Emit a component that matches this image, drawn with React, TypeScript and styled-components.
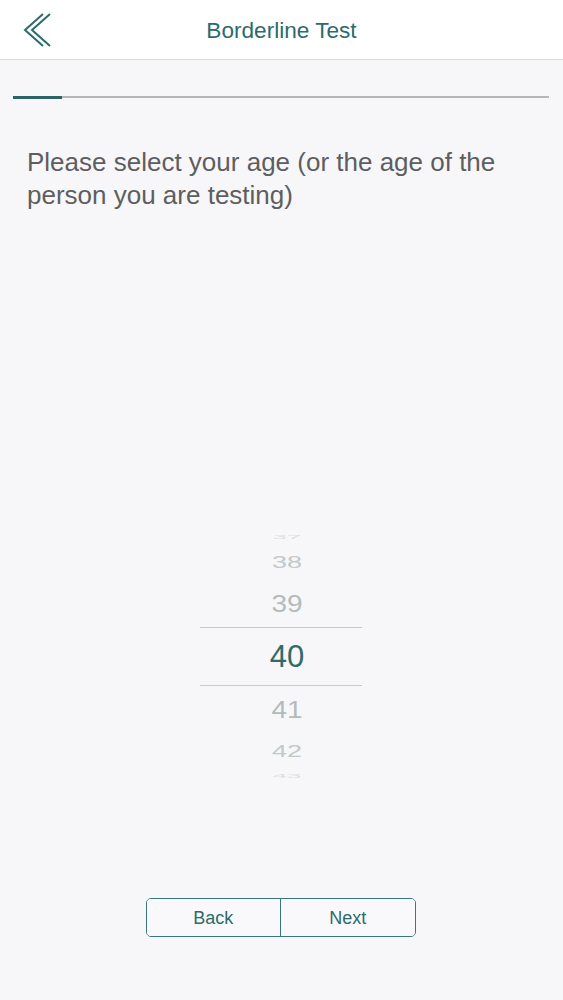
import React from "react";
import styled, { createGlobalStyle } from "styled-components";

const GlobalStyle = createGlobalStyle`
  html, body {
    margin: 0;
    padding: 0;
    background: #f7f7f9;
  }
  body {
    font-family: "Liberation Sans", Arial, Helvetica, sans-serif;
  }
`;

const TEAL = "#2c6b6d";

const Page = styled.div`
  width: 563px;
  min-height: 1000px;
  display: flex;
  flex-direction: column;
  background: #f7f7f9;
`;

const Header = styled.header`
  height: 59px;
  display: grid;
  grid-template-columns: 1fr auto 1fr;
  align-items: center;
  background: #ffffff;
  border-bottom: 1px solid #dedee0;
`;

const BackIcon = styled.button`
  justify-self: start;
  display: flex;
  padding: 0 0 0 23px;
  margin-top: 1px;
  border: none;
  background: none;
  cursor: pointer;
`;

const Title = styled.h1`
  margin: 0;
  padding-top: 3px;
  font-size: 22.6px;
  font-weight: 400;
  color: ${TEAL};
`;

const ProgressTrack = styled.div`
  position: relative;
  margin: 36px 14px 0 13px;
  height: 2px;
  background: #b4b6b8;
`;

const ProgressFill = styled.div`
  position: absolute;
  left: 0;
  top: -0.5px;
  height: 3px;
  background: #2a6466;
`;

const Question = styled.p`
  margin: 48px 27px 0 27px;
  font-size: 26px;
  line-height: 33px;
  color: #5e5e60;
`;

const Picker = styled.div`
  align-self: center;
  width: 162px;
  margin: 318px 0 0 -1px;
  display: flex;
  flex-direction: column;
`;

const PickerRow = styled.div<{ $h: number; $selected?: boolean }>`
  height: ${(p) => p.$h}px;
  box-sizing: border-box;
  display: flex;
  align-items: center;
  justify-content: center;
  padding-left: 12px;
  overflow: hidden;
  border-top: ${(p) => (p.$selected ? "1px solid #c9cacc" : "none")};
  border-bottom: ${(p) => (p.$selected ? "1px solid #c9cacc" : "none")};
`;

const PickerValue = styled.span<{ $size: number; $scale: number; $color: string }>`
  display: inline-block;
  font-size: ${(p) => p.$size}px;
  line-height: 1;
  color: ${(p) => p.$color};
  transform: scaleY(${(p) => p.$scale});
`;

const ButtonGroup = styled.div`
  align-self: center;
  margin: 115px 0 0 -2px;
  display: flex;
  width: 270px;
  height: 39px;
  box-sizing: border-box;
  border: 1.5px solid #3a7779;
  border-radius: 5px;
  overflow: hidden;
`;

const NavButton = styled.button<{ $divider?: boolean }>`
  flex: 1;
  border: none;
  border-right: ${(p) => (p.$divider ? "1.5px solid #3a7779" : "none")};
  background: #f9f9fb;
  font-family: "Liberation Sans", Arial, sans-serif;
  font-size: 18px;
  color: ${TEAL};
  padding: 1px 0 0 0;
  cursor: pointer;
`;

const rows = [
  { value: 37, h: 14, size: 26, scale: 0.2, color: "#dde0e0" },
  { value: 38, h: 36, size: 27, scale: 0.64, color: "#c3c8c8" },
  { value: 39, h: 47, size: 28, scale: 0.86, color: "#b4bbbb" },
  { value: 40, h: 59, size: 31, scale: 1, color: "#2f6a6c", selected: true },
  { value: 41, h: 47, size: 28, scale: 0.86, color: "#b4bbbb" },
  { value: 42, h: 36, size: 27, scale: 0.64, color: "#c3c8c8" },
  { value: 43, h: 14, size: 26, scale: 0.2, color: "#dde0e0" },
];

export default function App() {
  const progress = 49;
  return (
    <Page>
      <GlobalStyle />
      <Header>
        <BackIcon aria-label="Back">
          <svg width="30" height="36" viewBox="0 0 30 36" fill="none">
            <path d="M20 2 L2 18 L20 34" stroke={TEAL} strokeWidth="2" />
            <path d="M27 2 L9 18 L27 34" stroke={TEAL} strokeWidth="2" />
          </svg>
        </BackIcon>
        <Title>Borderline Test</Title>
        <div />
      </Header>

      <ProgressTrack>
        <ProgressFill style={{ width: progress }} />
      </ProgressTrack>

      <Question>
        Please select your age (or the age of the person you are testing)
      </Question>

      <Picker>
        {rows.map((r) => (
          <PickerRow key={r.value} $h={r.h} $selected={r.selected}>
            <PickerValue $size={r.size} $scale={r.scale} $color={r.color}>
              {r.value}
            </PickerValue>
          </PickerRow>
        ))}
      </Picker>

      <ButtonGroup>
        <NavButton $divider>Back</NavButton>
        <NavButton>Next</NavButton>
      </ButtonGroup>
    </Page>
  );
}
